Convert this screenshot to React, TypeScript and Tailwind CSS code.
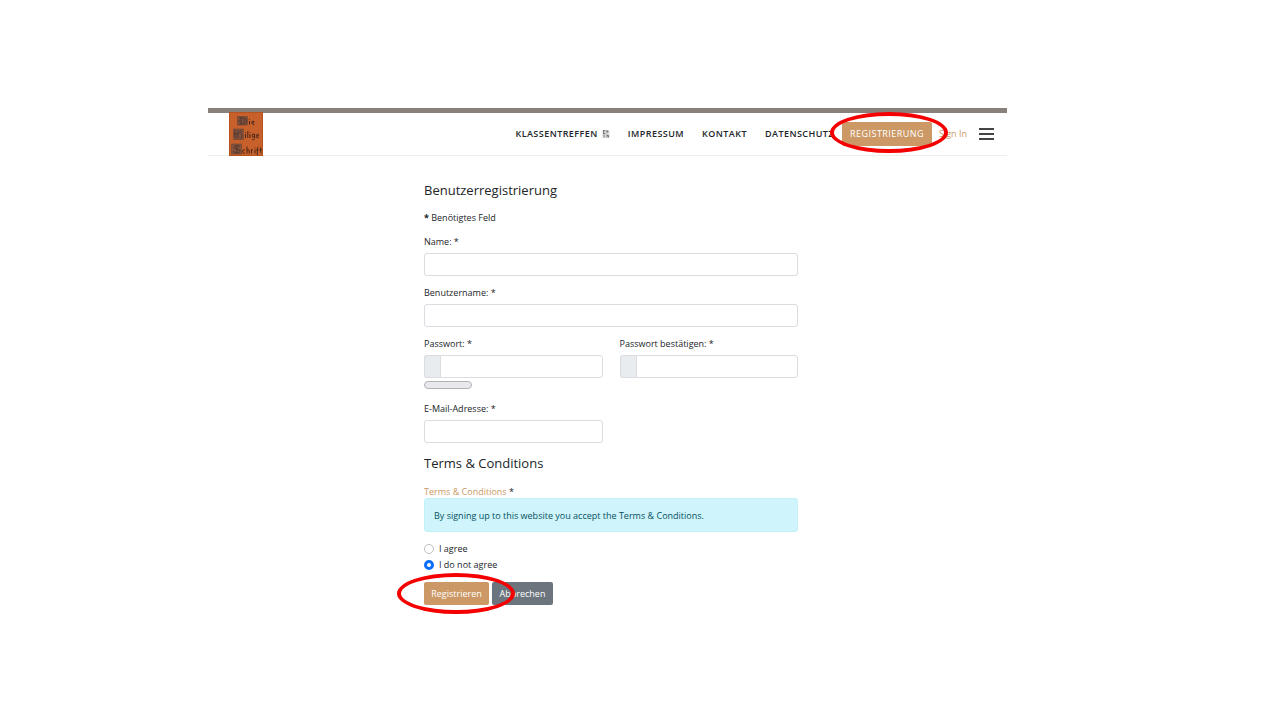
import React, { useState } from "react";

const inputStyle =
  "block h-[23px] w-full rounded-[3px] border border-[#d9dde1] bg-white px-2 outline-none";

function Field({
  id,
  label,
  type = "text",
  addon = false,
}: {
  id: string;
  label: string;
  type?: string;
  addon?: boolean;
}) {
  return (
    <div>
      <label htmlFor={id} className="mb-[3px] block leading-4">
        {label} *
      </label>
      {addon ? (
        <div className="flex">
          <span className="w-4 shrink-0 rounded-l-[3px] border border-r-0 border-[#d9dde1] bg-[#e9ecef]" />
          <input
            id={id}
            type={type}
            className="block h-[23px] w-full min-w-0 rounded-r-[3px] border border-[#d9dde1] bg-white px-2 outline-none"
          />
        </div>
      ) : (
        <input id={id} type={type} className={inputStyle} />
      )}
    </div>
  );
}

//* Red marker drawn around a button
function Marker({ className }: { className: string }) {
  return (
    <span
      className={`pointer-events-none absolute z-10 h-[41px] w-[118px] rounded-[50%] border-4 border-[#f40000] ${className}`}
    />
  );
}

function Logo() {
  return (
    <svg
      viewBox="0 0 34 44"
      className="h-11 w-[34px]"
      role="img"
      aria-label="Die Heilige Schrift"
    >
      <rect width="34" height="44" fill="#c7602a" />
      <rect x="0.5" y="0.5" width="33" height="43" fill="none" stroke="#b5531f" />
      {/* ornamental initials */}
      <g fill="#87513a" stroke="#6a4534" strokeWidth="0.6">
        <rect x="8.5" y="4.5" width="10" height="8.5" />
        <rect x="4.5" y="17" width="10" height="10.5" />
        <rect x="2.5" y="32" width="10" height="10" />
      </g>
      <g fill="none" stroke="#4b3531" strokeWidth="0.9">
        <path d="M10 6h6l1.500 2v2.500l-2 1.500H10M12 5v7M15 7v4M9 9h3" />
        <path d="M6 18v7l2 1.500M9 18v8M9 21.500c2-1.500 4-.5 4 1.500v2l-1.500 1.500M5 22h4M11 19h2" />
        <path d="M11 34.500c-2-1.500-6-1-6 1s6 1 6 3.500-4 2.500-7 .5M8 33v8" />
      </g>
      {/* blackletter words, drawn as pen strokes */}
      <g fill="none" stroke="#4a271b" strokeWidth="1">
        <path d="M20.500 9v3.500M20.500 7v.8M25.300 12.200l-1.500.3-.8-1.200V9.800l.8-.8 1.200.5-.2 1-1.500.4" />
        <path d="M16.500 22v4M16.500 20v.8M18.800 19v7M21 22v4M21 20v.8M25.300 22l-1.500.2-.6 1 .3 1.600 1.500.4M25.500 22v4.500l-1 1.300-1.300-.2M29.800 25.500l-1.500.4-.9-1.200v-1.600l.9-.9 1.300.6-.2 1-1.700.4" />
        <path d="M16 38l-1.500-.3-.8 1.300v1.500l.8.9 1.500-.4M18 34.500v7M18 38.200l1.800-.7.4 1v3M22.500 37.500v4M22.500 38.200l1.500-.6M26 37.500v4M26 35.500v.8M28.300 43v-7l1.200-1.200M27.400 38h2.300M31.700 35.500v5l.8.8M30.500 37.700h2.400" />
      </g>
    </svg>
  );
}

export default function App() {
  const [agree, setAgree] = useState("no");

  return (
    <div className="min-h-screen bg-white pt-[108px] pr-[273px] pb-12 pl-52 font-['Open_Sans','Noto_Sans',sans-serif] text-[9px] text-[#212529]">
      <header className="flex h-12 items-center border-t-[5px] border-b border-t-[#87807b] border-b-[#eeeeee] pr-[13px] pl-[21px]">
        <Logo />
        <nav className="ml-auto flex items-center gap-[18px] font-semibold tracking-wider whitespace-nowrap">
          <a href="#klassentreffen" className="flex items-center gap-1">
            KLASSENTREFFEN
            <svg viewBox="0 0 8 9" className="h-[9px] w-2" fill="none">
              <rect x="0.500" y="0" width="7" height="8" fill="#dcdcdc" />
              <path
                d="M1.500 0v3.500M1.500 .5h1.500v1M5 0v3M5 1.500h1.500M1 3.500h2.500M2 4.500v3M5 4.500v3M5 5.500h1.500v2"
                stroke="#666"
                strokeWidth="0.8"
              />
            </svg>
          </a>
          <a href="#impressum">IMPRESSUM</a>
          <a href="#kontakt">KONTAKT</a>
          <a href="#datenschutz">DATENSCHUTZ</a>
        </nav>
        <div className="relative ml-2">
          <button className="block h-6 w-[90px] rounded-[2px] bg-[#cc9966] tracking-wider text-white">
            REGISTRIERUNG
          </button>
          <Marker className="-top-[10px] -left-3" />
        </div>
        <a href="#signin" className="ml-[7px] whitespace-nowrap text-[#cc9966]">
          Sign In
        </a>
        <button aria-label="Menu" className="ml-3 grid w-[15px] gap-[3px]">
          <span className="h-[2px] bg-[#444]" />
          <span className="h-[2px] bg-[#444]" />
          <span className="h-[2px] bg-[#444]" />
        </button>
      </header>

      <form
        className="mt-6 mr-[209px] ml-[216px]"
        onSubmit={(e) => e.preventDefault()}
      >
        <h1 className="text-[13px] leading-5">Benutzerregistrierung</h1>
        <p className="mt-[10px] leading-4">
          <strong>*</strong> Benötigtes Feld
        </p>

        <div className="mt-2 grid gap-[9px]">
          <Field id="name" label="Name:" />
          <Field id="username" label="Benutzername:" />
          <div className="grid grid-cols-2 gap-[17px]">
            <div>
              <Field id="password" label="Passwort:" type="password" addon />
              <div className="mt-[3px] h-2 w-12 rounded-full border border-[#b1b1b8] bg-[#e9e9ed]" />
            </div>
            <Field
              id="password2"
              label="Passwort bestätigen:"
              type="password"
              addon
            />
          </div>
        </div>
        <div className="mt-3 grid grid-cols-2 gap-[17px]">
          <Field id="email" label="E-Mail-Adresse:" type="email" />
        </div>

        <h2 className="mt-[10px] text-[13px] leading-5">
          Terms &amp; Conditions
        </h2>
        <p className="mt-3 leading-[13px]">
          <a href="#terms" className="text-[#cc9966]">
            Terms &amp; Conditions
          </a>{" "}
          *
        </p>
        <div className="rounded-[3px] border border-[#c3f1fa] bg-[#cff4fc] px-[9px] pt-[9px] pb-[7px] leading-4 text-[#055160]">
          By signing up to this website you accept the Terms &amp; Conditions.
        </div>

        <div className="mt-[9px]">
          <label className="flex h-4 items-center gap-[5px]">
            <input
              type="radio"
              name="terms"
              checked={agree === "yes"}
              onChange={() => setAgree("yes")}
              className="size-[10px] appearance-none rounded-full border border-[#bfbfbf] checked:border-[3px] checked:border-[#0d6efd]"
            />
            I agree
          </label>
          <label className="flex h-4 items-center gap-[5px]">
            <input
              type="radio"
              name="terms"
              checked={agree === "no"}
              onChange={() => setAgree("no")}
              className="size-[10px] appearance-none rounded-full border border-[#bfbfbf] checked:border-[3px] checked:border-[#0d6efd]"
            />
            I do not agree
          </label>
        </div>

        <div className="relative mt-[9px] flex gap-[3px] text-white">
          <button
            type="submit"
            className="h-[23px] w-[65px] rounded-[2px] bg-[#cc9966]"
          >
            Registrieren
          </button>
          <button
            type="button"
            className="h-[23px] w-[61px] rounded-[2px] bg-[#6c757d]"
          >
            Abbrechen
          </button>
          <Marker className="-top-[9px] -left-[27px]" />
        </div>
      </form>
    </div>
  );
}
